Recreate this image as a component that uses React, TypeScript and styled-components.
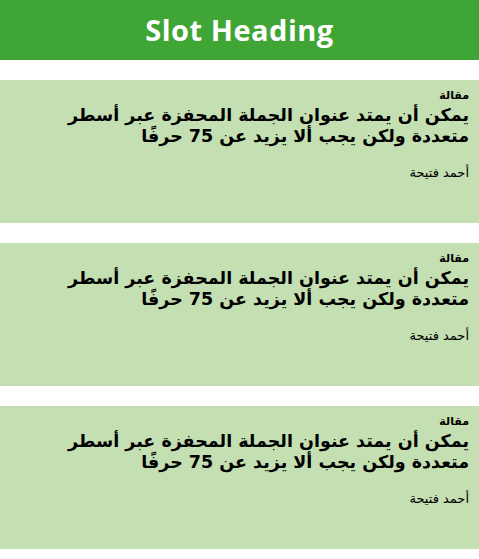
import React from "react";
import styled, { createGlobalStyle } from "styled-components";

const Global = createGlobalStyle`
  html, body { margin: 0; padding: 0; background: #fff; }
  body { font-family: "DejaVu Sans", sans-serif; }
`;

const Page = styled.div`
  display: flex;
  flex-direction: column;
  gap: 20px;
`;

const Header = styled.header`
  height: 60px;
  background: #3fa535;
  display: flex;
  align-items: center;
  justify-content: center;
`;

const Heading = styled.h1`
  margin: 0;
  color: #fff;
  font-family: "Open Sans", "Lato", sans-serif;
  font-weight: 700;
  font-size: 29px;
  letter-spacing: 0.5px;
  line-height: 34px;
`;

const Card = styled.article`
  background: #c4dfb2;
  height: 143px;
  box-sizing: border-box;
  padding: 9px 10px 0 10px;
  direction: rtl;
  text-align: right;
  font-family: "DejaVu Sans", sans-serif;
  color: #000;
`;

const Label = styled.div`
  font-size: 11px;
  font-weight: 700;
  line-height: 14px;
`;

const Title = styled.h2`
  margin: 2px 0 0;
  font-size: 17.5px;
  font-weight: 700;
  line-height: 21px;
`;

const Author = styled.div`
  margin-top: 17px;
  font-size: 13px;
  line-height: 17px;
`;

const items = [0, 1, 2];

export default function App() {
  return (
    <>
      <Global />
      <Page>
        <Header>
          <Heading>Slot Heading</Heading>
        </Header>
        {items.map((i) => (
          <Card key={i}>
            <Label>مقالة</Label>
            <Title>يمكن أن يمتد عنوان الجملة المحفزة عبر أسطر متعددة ولكن يجب ألا يزيد عن 75 حرفًا</Title>
            <Author>أحمد فتيحة</Author>
          </Card>
        ))}
      </Page>
    </>
  );
}
